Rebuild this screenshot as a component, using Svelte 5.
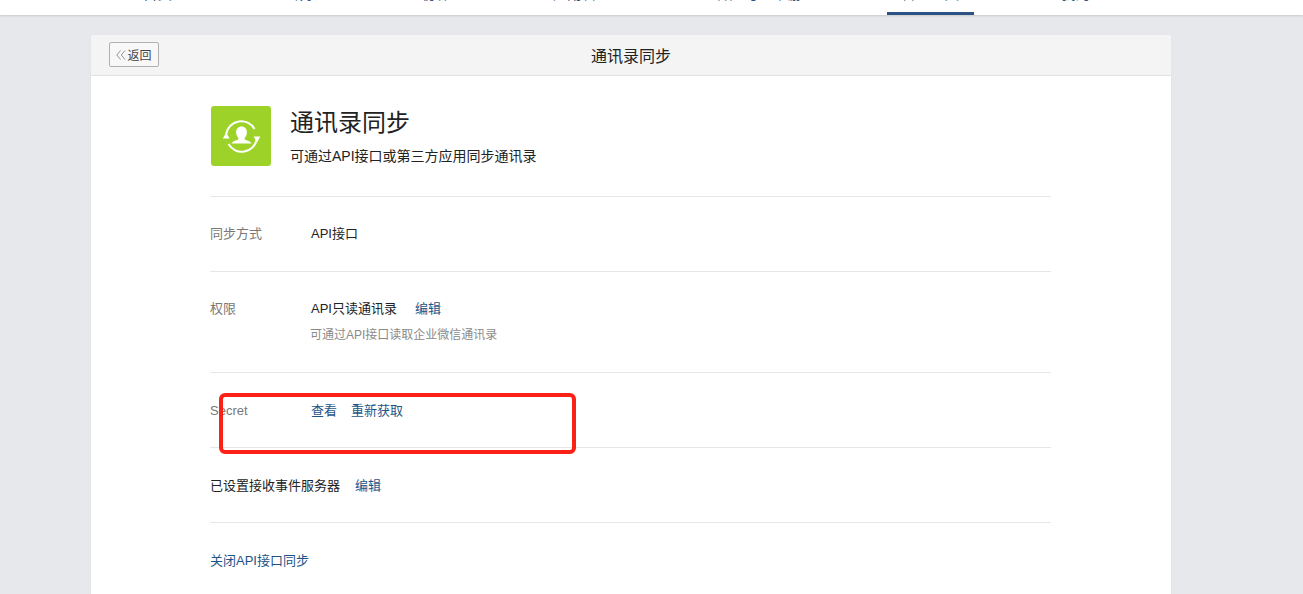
<script>
  const tabs = [
    { label: '首页', left: 143 },
    { label: '通讯录', left: 274 },
    { label: '协作', left: 422 },
    { label: '应用管理', left: 553 },
    { label: '客户与上下游', left: 715 },
    { label: '管理工具', left: 901, active: true },
    { label: '我的企业', left: 1061 }
  ];
</script>

<div class="page">
  <nav class="topnav">
    {#each tabs as tab}
      <a class="tab" class:active={tab.active} href="#top" style="left: {tab.left}px">{tab.label}</a>
    {/each}
    <span class="tab-line"></span>
  </nav>

  <main class="card">
    <header class="card-head">
      <button class="back" type="button">
        <svg class="back-arrows" viewBox="0 0 10 10" width="10" height="10" fill="none">
          <path d="M4.500.5L.8 5l3.700 4.500M9 .5L5.300 5 9 9.500" stroke="#888" stroke-width="0.9" />
        </svg>返回
      </button>
      <h1>通讯录同步</h1>
    </header>

    <div class="card-body">
      <section class="intro">
        <div class="logo">
          <svg viewBox="0 0 60 60" width="60" height="60" fill="none">
            <path d="M15.200 28A15.200 15.200 0 0 1 43.500 23" stroke="#fff" stroke-width="2" />
            <path d="M45.800 33A15.200 15.200 0 0 1 17.500 38" stroke="#fff" stroke-width="2" />
            <path d="M11.800 32.500h6.800L15.200 26.500zM42.600 30.500h6.800l-3.400 6z" fill="#fff" />
            <path
              d="M30.500 20.500c-3.400 0-5.400 2.500-5.400 5.700 0 2.300.9 4.300 2.200 5.500v1.500c-.8 1.200-5.900 1.600-6.800 4.300h20c-.9-2.700-6-3.100-6.800-4.300v-1.500c1.300-1.200 2.200-3.200 2.200-5.500 0-3.200-2-5.700-5.400-5.700z"
              fill="#fff"
            />
          </svg>
        </div>
        <div>
          <h2>通讯录同步</h2>
          <p>可通过API接口或第三方应用同步通讯录</p>
        </div>
      </section>

      <section class="row">
        <div class="label">同步方式</div>
        <div>API接口</div>
      </section>

      <section class="row">
        <div class="label">权限</div>
        <div>
          <div>API只读通讯录<a class="link edit" href="#top">编辑</a></div>
          <div class="hint">可通过API接口读取企业微信通讯录</div>
        </div>
      </section>

      <section class="row nudge">
        <div class="label">Secret</div>
        <div>
          <a class="link" href="#top">查看</a><a class="link refetch" href="#top">重新获取</a>
        </div>
      </section>

      <section class="row plain nudge">
        <div>已设置接收事件服务器<a class="link edit tight" href="#top">编辑</a></div>
      </section>

      <section class="row plain last nudge">
        <a class="link" href="#top">关闭API接口同步</a>
      </section>
    </div>

    <div class="annotation"></div>
  </main>
</div>

<style>
  :global(body) {
    margin: 0;
    background: #e7e8eb;
    font-family: "Liberation Sans", "Noto Sans CJK SC", sans-serif;
    font-size: 13px;
    color: #222;
  }

  .page {
    height: 594px;
    overflow: hidden;
  }

  .topnav {
    position: relative;
    height: 15px;
    background: #fff;
    box-shadow: 0 1px 2px rgba(0, 0, 0, 0.14);
    overflow: hidden;
  }

  .tab {
    position: absolute;
    bottom: 11px;
    line-height: 20px;
    font-size: 14.5px;
    color: #2b5a8a;
    text-decoration: none;
    white-space: nowrap;
  }

  .tab-line {
    position: absolute;
    left: 887px;
    bottom: 0;
    width: 87px;
    height: 3px;
    background: #2b5385;
  }

  .card {
    position: relative;
    width: 1080px;
    margin: 20px 0 0 91px;
    background: #fff;
    border-radius: 4px 4px 0 0;
    box-shadow: 0 1px 2px rgba(0, 0, 0, 0.06);
  }

  .card-head {
    position: relative;
    height: 40px;
    background: #f4f4f4;
    border-bottom: 1px solid #e2e3e4;
    border-radius: 4px 4px 0 0;
    display: flex;
    align-items: center;
    justify-content: center;
  }

  .card-head h1 {
    margin: 0;
    font-size: 16px;
    font-weight: 400;
    color: #222;
  }

  .back {
    position: absolute;
    left: 18px;
    top: 7px;
    width: 50px;
    height: 25px;
    padding: 0;
    border: 1px solid #b0b0b0;
    border-radius: 2px;
    background: #f8f8f8;
    font: inherit;
    font-size: 12px;
    color: #444;
    display: flex;
    align-items: center;
    justify-content: center;
    gap: 1px;
  }

  .card-body {
    margin: 0 120px 0 119px;
    padding-top: 30px;
  }

  .intro {
    display: flex;
    gap: 19px;
    height: 60px;
    padding-bottom: 30px;
    border-bottom: 1px solid #e4e6e9;
  }

  .logo {
    width: 60px;
    height: 60px;
    margin-left: 1px;
    border-radius: 3px;
    background: #9dd228;
  }

  .logo svg {
    display: block;
  }

  .intro h2 {
    margin: 0;
    font-size: 24px;
    line-height: 34px;
    font-weight: 400;
    color: #222;
  }

  .intro p {
    margin: 6px 0 0;
    font-size: 14px;
    line-height: 20px;
    color: #222;
  }

  .row {
    display: flex;
    padding: 27px 0;
    line-height: 20px;
    border-bottom: 1px solid #e4e6e9;
  }

  .row.nudge {
    padding: 28px 0 26px;
  }

  .row .label {
    width: 101px;
    flex-shrink: 0;
    color: #787878;
  }

  .row.last {
    border-bottom: 0;
  }

  .hint {
    margin: 6px 0 0 -1px;
    font-size: 12px;
    color: #8a8a8a;
  }

  .link {
    color: #1d5488;
    text-decoration: none;
  }

  .edit {
    margin-left: 18px;
  }

  .edit.tight {
    margin-left: 15px;
  }

  .refetch {
    margin-left: 14px;
  }

  .annotation {
    position: absolute;
    left: 128px;
    top: 358px;
    width: 349px;
    height: 53px;
    border: 4px solid #fb2116;
    border-radius: 6px;
    pointer-events: none;
  }
</style>
